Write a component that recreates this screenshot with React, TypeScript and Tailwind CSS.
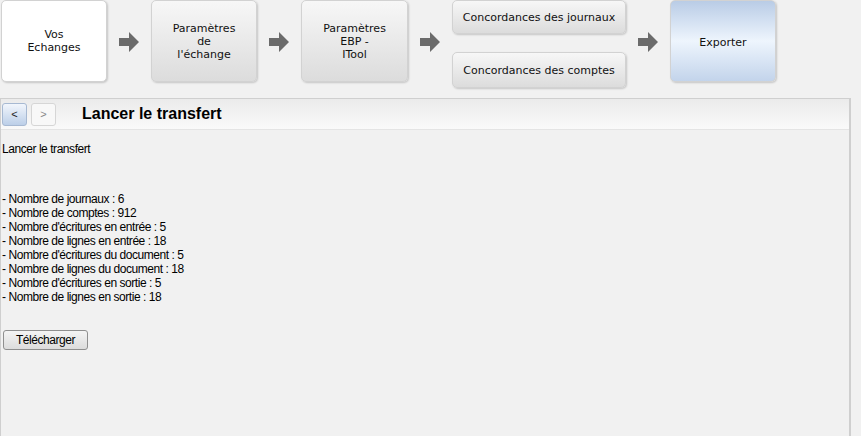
import React from 'react';

const stats = [
  "Nombre de journaux : 6",
  "Nombre de comptes : 912",
  "Nombre d'écritures en entrée : 5",
  "Nombre de lignes en entrée : 18",
  "Nombre d'écritures du document : 5",
  "Nombre de lignes du document : 18",
  "Nombre d'écritures en sortie : 5",
  "Nombre de lignes en sortie : 18",
];

const Arrow: React.FC = () => (
  <div className="flex h-[84px] w-[44px] shrink-0 items-center justify-center">
    <svg width="20" height="20" viewBox="0 0 20 20">
      <path d="M0 6 H10 V0 L20 10 L10 20 V14 H0 Z" fill="#6b6b6b" />
    </svg>
  </div>
);

const stepBase =
  'flex items-center justify-center text-center rounded-[5px] border border-[#d2d2d2] shadow-[1px_1px_2px_rgba(0,0,0,0.18)] text-[11px] leading-[13px] text-[#111]';

const App: React.FC = () => {
  return (
    <div className="h-[436px] w-[861px] overflow-hidden bg-[#f1f1f1] font-['DejaVu_Sans',Verdana,sans-serif]">
      {/* steps */}
      <div className="flex h-[98px] items-start pl-[1px]">
        <div className={`${stepBase} h-[82px] w-[106px] bg-white`}>
          <span>Vos<br />Echanges</span>
        </div>
        <Arrow />
        <div className={`${stepBase} h-[82px] w-[106px] bg-gradient-to-b from-[#f7f7f7] to-[#dcdcdc]`}>
          <span>Paramètres<br />de<br />l'échange</span>
        </div>
        <Arrow />
        <div className={`${stepBase} h-[82px] w-[107px] bg-gradient-to-b from-[#f7f7f7] to-[#dcdcdc]`}>
          <span>Paramètres<br />EBP -<br />ITool</span>
        </div>
        <Arrow />
        <div className="flex h-[88px] w-[174px] flex-col justify-between">
          <div className={`${stepBase} h-[34px] bg-gradient-to-b from-[#f7f7f7] to-[#dcdcdc]`}>
            Concordances des journaux
          </div>
          <div className={`${stepBase} h-[36px] bg-gradient-to-b from-[#f7f7f7] to-[#dcdcdc]`}>
            Concordances des comptes
          </div>
        </div>
        <Arrow />
        <div className={`${stepBase} h-[82px] w-[106px] border-[#a9bbd4] bg-gradient-to-b from-[#b9cce6] via-[#eef5fd] to-[#c3d4eb] pt-[3px]`}>
          Exporter
        </div>
      </div>

      {/* panel */}
      <div className="h-[338px] w-[851px] border-t border-l border-r-2 border-[#cfcfcf] font-['Liberation_Sans',Arial,sans-serif]">
        <div className="flex h-[31px] items-center border-b border-[#e4e4e4] bg-gradient-to-b from-[#ebebeb] to-[#fafafa] pl-[1px]">
          <button className="h-[23px] w-[25px] rounded-[3px] border border-[#a7b9d2] bg-gradient-to-b from-[#f2f6fc] to-[#bccfe8] text-[11px] leading-none text-[#222]">
            &lt;
          </button>
          <button className="ml-[4px] h-[23px] w-[25px] rounded-[3px] border border-[#d6d6d6] bg-[#f8f8f8] text-[11px] leading-none text-[#888]">
            &gt;
          </button>
          <div className="ml-[26px] text-[16px] font-bold text-black">Lancer le transfert</div>
        </div>
        <div className="pl-[1px] pt-[12px] text-[12px] leading-[14px] tracking-[-0.45px] text-black">
          <div>Lancer le transfert</div>
          <div className="mt-[36px]">
            {stats.map((s) => (
              <div key={s}>- {s}</div>
            ))}
          </div>
          <button className="mt-[26px] ml-[1px] h-[20px] w-[85px] rounded-[3px] border border-[#8f8f8f] bg-gradient-to-b from-[#f4f4f4] to-[#dcdcdc] text-[12px] leading-none text-black">
            Télécharger
          </button>
        </div>
      </div>
    </div>
  );
};

export default App;
